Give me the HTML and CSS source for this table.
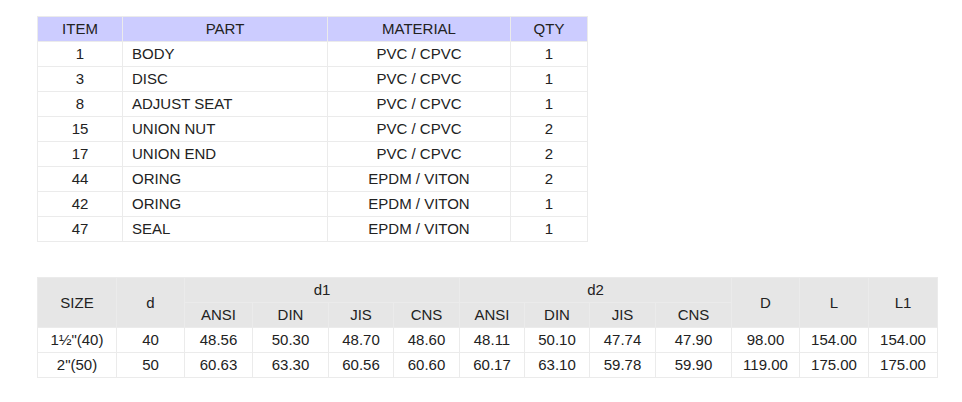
FILE: index.html
```html
<!DOCTYPE html>
<html lang="en">
<head>
<meta charset="utf-8">
<title>Parts and Dimensions</title>
<link rel="stylesheet" href="styles.css">
</head>
<body>
<div class="page">
  <table class="parts">
    <colgroup>
      <col class="c-item"><col class="c-part"><col class="c-mat"><col class="c-qty">
    </colgroup>
    <thead>
      <tr><th>ITEM</th><th>PART</th><th>MATERIAL</th><th>QTY</th></tr>
    </thead>
    <tbody>
      <tr><td>1</td><td class="left">BODY</td><td>PVC / CPVC</td><td>1</td></tr>
      <tr><td>3</td><td class="left">DISC</td><td>PVC / CPVC</td><td>1</td></tr>
      <tr><td>8</td><td class="left">ADJUST SEAT</td><td>PVC / CPVC</td><td>1</td></tr>
      <tr><td>15</td><td class="left">UNION NUT</td><td>PVC / CPVC</td><td>2</td></tr>
      <tr><td>17</td><td class="left">UNION END</td><td>PVC / CPVC</td><td>2</td></tr>
      <tr><td>44</td><td class="left">ORING</td><td>EPDM / VITON</td><td>2</td></tr>
      <tr><td>42</td><td class="left">ORING</td><td>EPDM / VITON</td><td>1</td></tr>
      <tr><td>47</td><td class="left">SEAL</td><td>EPDM / VITON</td><td>1</td></tr>
    </tbody>
  </table>

  <table class="dims">
    <colgroup>
      <col class="w79"><col class="w68"><col class="w68"><col class="w76"><col class="w65"><col class="w66">
      <col class="w65"><col class="w65"><col class="w66"><col class="w76"><col class="w68"><col class="w69"><col class="w69">
    </colgroup>
    <thead>
      <tr>
        <th rowspan="2">SIZE</th>
        <th rowspan="2">d</th>
        <th colspan="4">d1</th>
        <th colspan="4">d2</th>
        <th rowspan="2">D</th>
        <th rowspan="2">L</th>
        <th rowspan="2">L1</th>
      </tr>
      <tr>
        <th>ANSI</th><th>DIN</th><th>JIS</th><th>CNS</th>
        <th>ANSI</th><th>DIN</th><th>JIS</th><th>CNS</th>
      </tr>
    </thead>
    <tbody>
      <tr>
        <td>1½"(40)</td><td>40</td><td>48.56</td><td>50.30</td><td>48.70</td><td>48.60</td>
        <td>48.11</td><td>50.10</td><td>47.74</td><td>47.90</td><td>98.00</td><td>154.00</td><td>154.00</td>
      </tr>
      <tr>
        <td>2"(50)</td><td>50</td><td>60.63</td><td>63.30</td><td>60.56</td><td>60.60</td>
        <td>60.17</td><td>63.10</td><td>59.78</td><td>59.90</td><td>119.00</td><td>175.00</td><td>175.00</td>
      </tr>
    </tbody>
  </table>
</div>
</body>
</html>
```

FILE: styles.css
```css
html, body {
  margin: 0;
  padding: 0;
  background: #ffffff;
}

.page {
  padding: 16px 0 0 37px;
  font-family: "Liberation Sans", Arial, sans-serif;
  font-size: 15px;
  color: #222222;
}

table {
  border-collapse: collapse;
  table-layout: fixed;
}

th, td {
  border: 1px solid #ebebeb;
  height: 24px;
  padding: 0 4px;
  text-align: center;
  vertical-align: middle;
  font-weight: normal;
  line-height: 24px;
  white-space: nowrap;
}

.parts {
  width: 550px;
}

.parts th {
  background: #ccccff;
}

.parts td.left {
  text-align: left;
  padding-left: 9px;
}

.c-item { width: 85px; }
.c-part { width: 205px; }
.c-mat { width: 183px; }
.c-qty { width: 77px; }

.dims {
  width: 900px;
  margin-top: 35px;
}

.dims th {
  background: #e6e6e6;
}

.w65 { width: 65px; }
.w66 { width: 66px; }
.w68 { width: 68px; }
.w69 { width: 69px; }
.w76 { width: 76px; }
.w79 { width: 79px; }
```
